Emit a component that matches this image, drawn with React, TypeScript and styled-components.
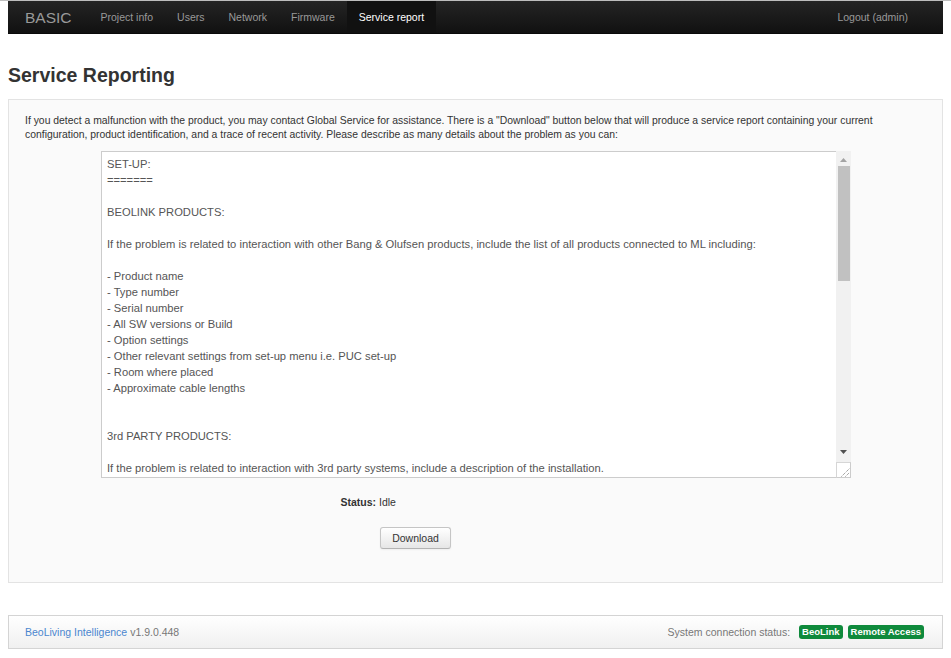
import React from "react";
import styled, { createGlobalStyle } from "styled-components";

const GlobalStyle = createGlobalStyle`
  html, body { margin: 0; padding: 0; background: #fff; }
  body {
    font-family: "Liberation Sans", Arial, Helvetica, sans-serif;
    font-size: 10.5px;
    line-height: 15px;
    color: #333;
    border-top: 1px solid #bdbdbd;
  }
`;

const Page = styled.div`
  padding: 0 8px;
  display: flex;
  flex-direction: column;
`;

const NavBar = styled.nav`
  height: 33px;
  display: flex;
  align-items: stretch;
  background: linear-gradient(#242424, #111111);
  border-bottom: 1px solid #0a0a0a;
  box-sizing: border-box;
  padding: 0 0 0 17px;
`;

const Brand = styled.span`
  font-size: 15.5px;
  color: #999;
  display: flex;
  align-items: center;
  padding-right: 17px;
`;

const NavItem = styled.a<{ $active?: boolean }>`
  display: flex;
  align-items: center;
  padding: 0 12px;
  font-size: 10.5px;
  color: ${(p) => (p.$active ? "#fff" : "#999")};
  background: ${(p) => (p.$active ? "#111" : "transparent")};
  text-decoration: none;
`;

const NavSpacer = styled.div`
  flex: 1;
`;

const Logout = styled(NavItem)`
  padding-right: 35px;
`;

const Title = styled.h2`
  margin: 30px 0 13px;
  font-size: 19.5px;
  line-height: 22px;
  font-weight: bold;
  color: #333;
`;

const Well = styled.section`
  background: #fafafa;
  border: 1px solid #e3e3e3;
  padding: 14px 16px 33px;
  display: flex;
  flex-direction: column;
`;

const Intro = styled.p`
  margin: 0 0 9px;
  font-size: 10.4px;
  line-height: 14px;
`;

const ReportBox = styled.div`
  align-self: center;
  margin-left: 1px;
  width: 750px;
  height: 327px;
  box-sizing: border-box;
  border: 1px solid #ccc;
  border-right: none;
  background: #fff;
  display: flex;
`;

const ReportArea = styled.textarea`
  flex: 1;
  min-width: 0;
  border: none;
  background: #fff;
  padding: 4px 5px;
  font-family: "Liberation Sans", Arial, Helvetica, sans-serif;
  font-size: 11.2px;
  line-height: 16px;
  color: #555;
  resize: none;
  outline: none;
  margin: 0;
  overflow: hidden;
`;

const ScrollRail = styled.div`
  width: 15px;
  display: flex;
  flex-direction: column;
  background: #f1f1f1;
  margin-top: -1px;
  margin-bottom: -1px;
`;

const ScrollButton = styled.div`
  height: 15px;
  display: flex;
  align-items: center;
  justify-content: center;
  flex: none;
`;

const ScrollTrack = styled.div`
  flex: 1;
  padding: 0 1px 0 2px;
  display: flex;
  flex-direction: column;
`;

const ScrollThumb = styled.div`
  height: 115px;
  background: #c1c1c1;
`;

const Resizer = styled.div`
  height: 16px;
  flex: none;
  box-sizing: border-box;
  background: #fff;
  border: 1px solid #d6d6d6;
  border-right-color: #ccc;
  border-bottom-color: #ccc;
  display: flex;
  align-items: flex-end;
  justify-content: flex-end;
`;

const FormRow = styled.div<{ $top: number }>`
  display: grid;
  grid-template-columns: 351px 1fr;
  column-gap: 3px;
  align-items: center;
  margin-top: ${(p) => p.$top}px;
`;

const Label = styled.span`
  text-align: right;
  font-weight: bold;
`;

const Value = styled.span``;

const Button = styled.button`
  justify-self: start;
  margin-left: 1px;
  width: 71px;
  height: 22px;
  font-family: "Liberation Sans", Arial, Helvetica, sans-serif;
  font-size: 10.5px;
  color: #333;
  background: linear-gradient(#ffffff, #e6e6e6);
  border: 1px solid #c5c5c5;
  border-bottom-color: #b3b3b3;
  border-radius: 3px;
  box-shadow: inset 0 1px 0 rgba(255, 255, 255, 0.2), 0 1px 2px rgba(0, 0, 0, 0.05);
  padding: 0;
`;

const Footer = styled.footer`
  margin-top: 32px;
  height: 34px;
  box-sizing: border-box;
  border: 1px solid #d4d4d4;
  background: linear-gradient(#ffffff, #f0f0f0);
  display: flex;
  align-items: center;
  padding: 0 18px 0 16px;
  color: #777;
`;

const FooterLink = styled.a`
  color: #4a86cf;
  text-decoration: none;
  margin-right: 3px;
`;

const Status = styled.span`
  margin-left: auto;
  margin-right: 4px;
`;

const Badge = styled.span`
  display: inline-block;
  background: #0f8a3c;
  color: #fff;
  font-weight: bold;
  font-size: 9.5px;
  line-height: 14px;
  padding: 0 3px;
  border-radius: 3px;
  margin-left: 5px;
`;

const report = `SET-UP:
=======

BEOLINK PRODUCTS:

If the problem is related to interaction with other Bang & Olufsen products, include the list of all products connected to ML including:

- Product name
- Type number
- Serial number
- All SW versions or Build
- Option settings
- Other relevant settings from set-up menu i.e. PUC set-up
- Room where placed
- Approximate cable lengths


3rd PARTY PRODUCTS:

If the problem is related to interaction with 3rd party systems, include a description of the installation.

- Product name and model
- Firmware version
- Connection type (IR, RS-232, IP)
- IP addresses and network settings


PROBLEM DESCRIPTION:
====================

Describe the problem as precisely as possible:

- What was the expected behaviour?
- What actually happened?
- When did the problem occur (date and time)?
- How often does the problem occur?
- Can the problem be reproduced? If so, how?
`;

const ArrowUp = () => (
  <svg width="7" height="4" viewBox="0 0 7 4" style={{ marginTop: 3 }}>
    <polygon points="0,4 7,4 3.5,0" fill="#a3a3a3" />
  </svg>
);

const ArrowDown = () => (
  <svg width="7" height="4" viewBox="0 0 7 4" style={{ marginTop: -5 }}>
    <polygon points="0,0 7,0 3.5,4" fill="#505050" />
  </svg>
);

const Grip = () => (
  <svg width="10" height="10" viewBox="0 0 10 10">
    <line x1="1.5" y1="9.5" x2="9.5" y2="1.5" stroke="#7a7a7a" strokeWidth="1" strokeDasharray="1 1" />
    <line x1="5.5" y1="9.5" x2="9.5" y2="5.5" stroke="#7a7a7a" strokeWidth="1" strokeDasharray="1 1" />
  </svg>
);

export default function App() {
  return (
    <>
      <GlobalStyle />
      <Page>
        <NavBar>
          <Brand>BASIC</Brand>
          <NavItem href="#">Project info</NavItem>
          <NavItem href="#">Users</NavItem>
          <NavItem href="#">Network</NavItem>
          <NavItem href="#">Firmware</NavItem>
          <NavItem href="#" $active>
            Service report
          </NavItem>
          <NavSpacer />
          <Logout href="#">Logout (admin)</Logout>
        </NavBar>
        <Title>Service Reporting</Title>
        <Well>
          <Intro>
            If you detect a malfunction with the product, you may contact Global Service for assistance. There is a
            "Download" button below that will produce a service report containing your current configuration, product
            identification, and a trace of recent activity. Please describe as many details about the problem as you
            can:
          </Intro>
          <ReportBox>
            <ReportArea defaultValue={report} spellCheck={false} />
            <ScrollRail>
              <ScrollButton>
                <ArrowUp />
              </ScrollButton>
              <ScrollTrack>
                <ScrollThumb />
              </ScrollTrack>
              <ScrollButton>
                <ArrowDown />
              </ScrollButton>
              <Resizer>
                <Grip />
              </Resizer>
            </ScrollRail>
          </ReportBox>
          <FormRow $top={17}>
            <Label>Status:</Label>
            <Value>Idle</Value>
          </FormRow>
          <FormRow $top={17}>
            <span />
            <Button>Download</Button>
          </FormRow>
        </Well>
        <Footer>
          <FooterLink href="#">BeoLiving Intelligence</FooterLink>
          <span>v1.9.0.448</span>
          <Status>System connection status:</Status>
          <Badge>BeoLink</Badge>
          <Badge>Remote Access</Badge>
        </Footer>
      </Page>
    </>
  );
}
